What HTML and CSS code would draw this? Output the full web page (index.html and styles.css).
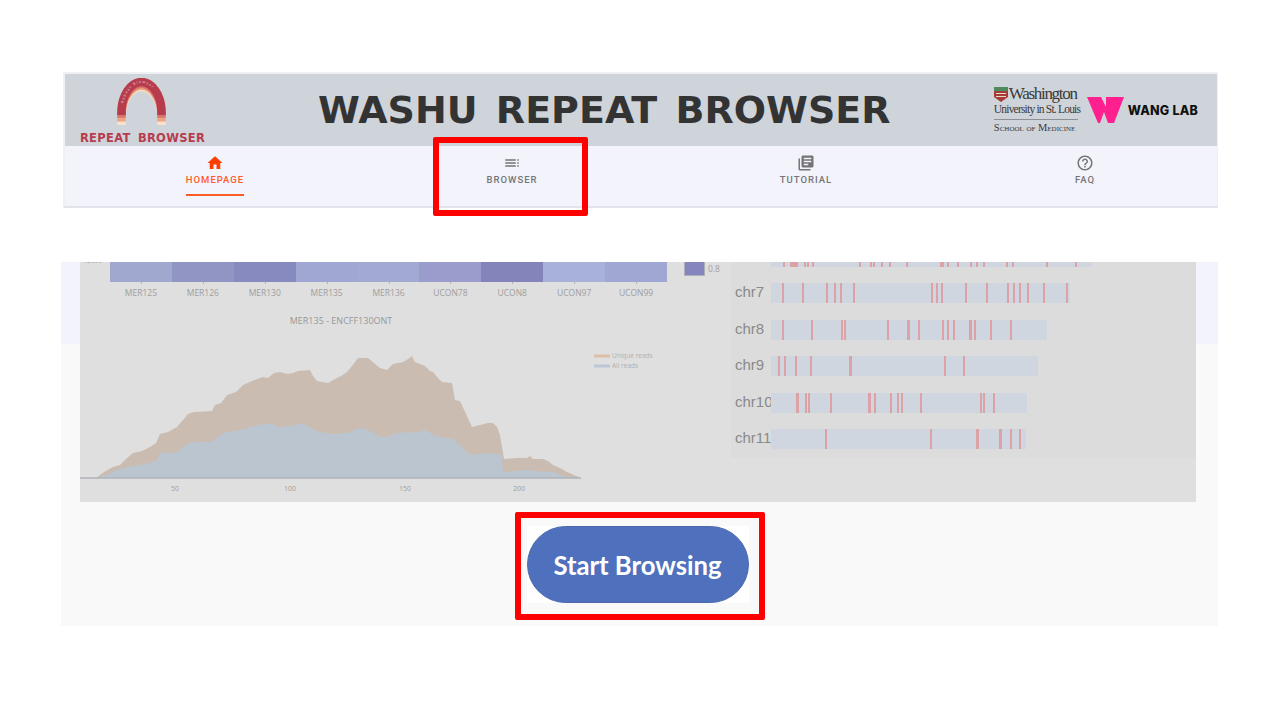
FILE: index.html
```html
<!DOCTYPE html>
<html lang="en">
<head>
    <meta charset="UTF-8">
    <meta name="viewport" content="width=device-width, initial-scale=1.0">
    <title>WashU Repeat Browser</title>
    <link rel="stylesheet" href="styles.css">
</head>
<body>

    <div class="page">
        <header class="topbar">
            <div class="banner">
                <div class="logo">
                    <svg class="arch" viewBox="118 78 50 48" width="50" height="48">
                        <g fill="none" stroke-width="8.5">
                            <path stroke="#fbe0c8" transform="translate(0 5)" d="M122.5 120V112C122.5 95 132 82 142.5 82C153 82 162.5 95 162.5 112V120"/>
                            <path stroke="#eca283" transform="translate(0 3.4)" d="M122.5 118V112C122.5 95 132 82 142.5 82C153 82 162.5 95 162.5 112V118"/>
                            <path stroke="#d9756a" transform="translate(0 1.7)" d="M122.5 116V112C122.5 95 132 82 142.5 82C153 82 162.5 95 162.5 112V116"/>
                            <path id="arch-band" stroke="#b63c4e" d="M122.5 115V112C122.5 95 132 82 142.5 82C153 82 162.5 95 162.5 112V115"/>
                        </g>
                        <text class="arch-text"><textPath href="#arch-band" startOffset="12">Repeat Browser</textPath></text>
                    </svg>
                    <span class="logo-name">REPEAT BROWSER</span>
                </div>
                <h1 class="title">WASHU REPEAT BROWSER</h1>
                <div class="partners">
                    <div class="washu">
                        <div class="washu-top">
                            <svg viewBox="0 0 14 15" width="14" height="15">
                                <rect width="14" height="4" fill="#4f8a5c"/>
                                <path d="M0 4h14v6l-7 5-7-5z" fill="#a83a3a"/>
                                <path d="M2 6h10v1H2zM2 9h10v1H2z" fill="#e4dcc0"/>
                            </svg>
                            <span class="washu-name">Washington</span>
                        </div>
                        <div class="washu-uni">University in St. Louis</div>
                        <div class="washu-school">School of Medicine</div>
                    </div>
                    <div class="wang">
                        <svg viewBox="0 0 37 27" width="37" height="27">
                            <path d="M0 0H14L19 10V0H37L27 26H21L17 15L13 26H11Z" fill="#ff1f8f"/>
                        </svg>
                        <span class="wang-name">WANG LAB</span>
                    </div>
                </div>
            </div>
            <nav class="tabs">
                <a class="tab active">
                    <svg viewBox="0 0 24 24" width="18" height="18"><path d="M10 20v-6h4v6h5v-8h3L12 3 2 12h3v8z"/></svg>
                    <span>Homepage</span>
                </a>
                <a class="tab">
                    <svg viewBox="0 0 24 24" width="18" height="18"><path d="M3 9h14V7H3v2zm0 4h14v-2H3v2zm0 4h14v-2H3v2zm16 0h2v-2h-2v2zm0-10v2h2V7h-2zm0 6h2v-2h-2v2z"/></svg>
                    <span>Browser</span>
                </a>
                <a class="tab">
                    <svg viewBox="0 0 24 24" width="18" height="18"><path d="M4 6H2v14c0 1.1.9 2 2 2h14v-2H4V6zm16-4H8c-1.1 0-2 .9-2 2v12c0 1.1.9 2 2 2h12c1.1 0 2-.9 2-2V4c0-1.1-.9-2-2-2zm-1 9H9V9h10v2zm-4 4H9v-2h6v2zm4-8H9V5h10v2z"/></svg>
                    <span>Tutorial</span>
                </a>
                <a class="tab">
                    <svg viewBox="0 0 24 24" width="18" height="18"><path d="M11 18h2v-2h-2v2zm1-16C6.48 2 2 6.48 2 12s4.48 10 10 10 10-4.48 10-10S17.52 2 12 2zm0 18c-4.41 0-8-3.59-8-8s3.59-8 8-8 8 3.59 8 8-3.59 8-8 8zm0-14c-2.21 0-4 1.79-4 4h2c0-1.1.9-2 2-2s2 .9 2 2c0 2-3 1.75-3 5h2c0-2.25 3-2.5 3-5 0-2.21-1.79-4-4-4z"/></svg>
                    <span>FAQ</span>
                </a>
            </nav>
        </header>

        <section class="panel">
            <div class="figure">
                <div class="plots">
                    <div class="heat-row">
                        <div class="heat-axis"><span>40MV</span></div>
                        <div class="heat">
                            <div class="cell c1"></div>
                            <div class="cell c2"></div>
                            <div class="cell c3"></div>
                            <div class="cell c4"></div>
                            <div class="cell c5"></div>
                            <div class="cell c6"></div>
                            <div class="cell c7"></div>
                            <div class="cell c8"></div>
                            <div class="cell c9"></div>
                            <span>MER125</span>
                            <span>MER126</span>
                            <span>MER130</span>
                            <span>MER135</span>
                            <span>MER136</span>
                            <span>UCON78</span>
                            <span>UCON8</span>
                            <span>UCON97</span>
                            <span>UCON99</span>
                        </div>
                        <div class="scale">
                            <div class="swatch"></div>
                            <span>0.8</span>
                        </div>
                    </div>
                    <svg class="area" viewBox="80 305 651 197" width="651" height="197">
                        <text class="area-title" x="341" y="324">MER135 - ENCFF130ONT</text>
                        <path class="grid" d="M175 348V478M290 348V478M405 348V478M519 348V478M96 391H581M96 434H581"/>
                        <path fill="#cbbcb1" d="M96 478L104 472L113 467L120 465L126 459L133 453L142 451L150 447L156 443L160 434L168 432L177 427L183 420L188 414L194 412L212 411L215 405L221 403L227 395L236 392L243 385L252 381L263 377L268 378L274 373L280 372L287 374L293 373L298 371L310 370L313 376L317 381L328 383L335 379L341 376L347 372L352 366L358 358L363 358L368 358L374 363L380 368L387 370L393 364L403 362L408 359L412 356L415 362L420 364L425 366L430 371L433 372L438 378L442 382L452 383L455 400L460 401L466 414L472 427L480 425L488 423L493 423L497 427L500 435L504 459L516 458L527 458L530 456L533 459L543 459L548 461L553 465L560 468L567 472L574 475L581 478Z"/>
                        <path fill="#bbc5d0" d="M96 478L107 475L113 472L117 470L128 467L140 465L150 463L157 460L160 453L170 453L178 452L183 447L188 443L196 442L212 442L216 438L225 432L237 431L250 427L263 424L273 424L280 427L293 426L298 423L308 426L314 430L320 432L332 434L348 433L354 430L360 428L368 430L375 434L380 437L387 437L397 433L418 432L425 430L435 436L453 439L460 445L470 455L487 453L502 455L503 472L527 470L533 471L553 472L567 477L581 478Z"/>
                        <path d="M80 478H581" stroke="#aeb3b9" stroke-width="1.5"/>
                        <g class="ticks">
                            <text x="175" y="491">50</text>
                            <text x="290" y="491">100</text>
                            <text x="405" y="491">150</text>
                            <text x="519" y="491">200</text>
                        </g>
                        <path d="M594 356H610" stroke="#dcbfa6" stroke-width="3"/>
                        <path d="M594 366H610" stroke="#b9c6d4" stroke-width="3"/>
                        <text class="legend" x="612" y="358">Unique reads</text>
                        <text class="legend" x="612" y="368">All reads</text>
                    </svg>
                </div>
                <div class="chroms" id="chroms"></div>
            </div>
            <div class="start-box">
                <button class="start">Start Browsing</button>
            </div>
        </section>

        <div class="callout callout-browser"></div>
        <div class="callout callout-start"></div>
    </div>

    <script>
        // mark offsets from the start of each track, [x, width] for the wider ones
        const chroms = [
            { name: "", width: 321, marks: [12, [19, 8], 33, 36, 41, 88, 99, 102, 110, 118, 135, 169, 171, 176, 186, 199, 205, 212, 235, 241, 275, 304] },
            { name: "chr7", width: 299, marks: [11, 31, 55, 63, 69, 82, 160, 165, 170, 194, 215, 236, 242, 248, 256, 272, 295] },
            { name: "chr8", width: 276, marks: [11, 40, 70, 73, 116, [136, 3], 147, 171, 176, 182, [198, 3], 203, 219, 239] },
            { name: "chr9", width: 267, marks: [7, 13, 24, 39, [78, 3], 173, 192] },
            { name: "chr10", width: 256, marks: [[25, 3], 34, 37, 59, [97, 3], 103, 119, 126, 130, 149, 209, 212, 222] },
            { name: "chr11", width: 255, marks: [54, 159, [205, 3], [228, 3], 239, 248] }
        ];

        const list = document.getElementById("chroms");
        chroms.forEach(function(chrom) {
            let row = document.createElement("div");
            row.className = chrom.name ? "chrom" : "chrom cut";
            let label = document.createElement("span");
            label.className = "chrom-name";
            label.innerText = chrom.name;
            let track = document.createElement("div");
            track.className = "track";
            track.style.width = chrom.width + "px";
            chrom.marks.forEach(function(m) {
                let [x, w = 2] = [].concat(m);
                let mark = document.createElement("i");
                mark.style.left = x + "px";
                mark.style.width = w + "px";
                track.appendChild(mark);
            });
            row.append(label, track);
            list.appendChild(row);
        });
    </script>

</body>
</html>
```

FILE: styles.css
```css
body {
    margin: 0;
    background-color: #fff;
    font-family: "Liberation Sans", Arial, sans-serif;
}
.page {
    position: relative;
    width: 1157px;
    margin-left: 61px;
    padding-top: 72px;
}

/* header */
.topbar {
    margin-left: 2px;
    border: 2px solid #eef0f4;
    border-bottom-color: #e2e3ea;
    border-right-width: 1px;
    background: #f2f3fb;
}
.banner {
    display: flex;
    align-items: center;
    height: 72px;
    background: #cfd4da;
}
.logo {
    display: flex;
    flex-direction: column;
    align-items: center;
    width: 125px;
    margin-left: 15px;
    height: 72px;
    padding-top: 4px;
    box-sizing: border-box;
}
.arch {
    display: block;
    margin-left: -2px;
}
.arch-text {
    font-family: "DejaVu Sans", sans-serif;
    font-size: 3.5px;
    letter-spacing: 1.2px;
    fill: #e6c4c8;
    dominant-baseline: middle;
}
.logo-name {
    margin-top: 5px;
    font-family: "DejaVu Sans", sans-serif;
    font-size: 11.5px;
    font-weight: 700;
    letter-spacing: 0.3px;
    word-spacing: 3px;
    white-space: nowrap;
    color: #b63c4e;
}
.title {
    margin: 0 0 0 113px;
    font-family: "DejaVu Sans", sans-serif;
    font-size: 38px;
    font-weight: 700;
    word-spacing: 5px;
    white-space: nowrap;
    color: #333;
}
.partners {
    display: flex;
    align-items: center;
    margin-left: auto;
    margin-right: 19px;
    gap: 9px;
}
.washu {
    width: 84px;
    color: #3a3a3a;
    font-family: "Liberation Serif", serif;
    white-space: nowrap;
}
.washu-top {
    display: flex;
    align-items: center;
    gap: 1px;
    height: 15px;
}
.washu-top svg {
    flex: none;
}
.washu-name {
    font-size: 17px;
    letter-spacing: -1.3px;
}
.washu-uni {
    font-size: 11.5px;
    letter-spacing: -0.8px;
    line-height: 15px;
    padding-bottom: 2px;
    border-bottom: 1px solid #8d9196;
}
.washu-school {
    font-size: 10.5px;
    font-variant: small-caps;
    line-height: 12px;
    letter-spacing: 0;
    margin-top: 2px;
}
.wang {
    display: flex;
    align-items: center;
    gap: 4px;
}
.wang-name {
    font-family: Inter, sans-serif;
    font-size: 12.5px;
    font-weight: 800;
    letter-spacing: 0.2px;
    color: #111;
    white-space: nowrap;
}

/* nav */
.tabs {
    display: grid;
    grid-template-columns: 300px 294px 294px 1fr;
    height: 60px;
}
.tab {
    display: flex;
    flex-direction: column;
    align-items: center;
    padding-top: 8px;
    box-sizing: border-box;
    font-family: Roboto, sans-serif;
    font-size: 9.5px;
    font-weight: 500;
    letter-spacing: 1px;
    text-transform: uppercase;
    color: #757575;
    fill: #757575;
}
.tab span {
    margin-top: 2px;
    padding-bottom: 8px;
    line-height: 12px;
}
.tab.active {
    color: #ff5a2a;
    fill: #ff3d00;
}
.tab.active span {
    border-bottom: 2px solid #ff5a2a;
}

/* figure area */
.panel {
    display: flex;
    flex-direction: column;
    align-items: center;
    margin-top: 54px;
    padding-bottom: 23px;
    background: linear-gradient(#f2f3fb 82px, #f9f9f9 82px);
}
.figure {
    display: flex;
    align-self: flex-start;
    width: 1116px;
    height: 240px;
    margin-left: 19px;
    background: #dfdfdf;
}
.plots {
    width: 651px;
}
.heat-row {
    display: flex;
    height: 43px;
}
.heat-axis {
    display: flex;
    align-items: flex-end;
    width: 30px;
    height: 2px;
    overflow: hidden;
    padding-left: 2px;
    box-sizing: border-box;
    font-size: 8px;
    color: #999;
}
.heat-axis span {
    line-height: 6px;
}
.heat {
    display: grid;
    grid-template-columns: repeat(9, 61.9px);
    grid-template-rows: 20px auto;
    width: 557px;
    font-family: "Open Sans", sans-serif;
    font-size: 8.5px;
    color: #9e9e9e;
    text-align: center;
}
.heat span {
    position: relative;
    margin-top: 5px;
    line-height: 12px;
}
.heat span::before {
    content: "";
    position: absolute;
    top: -5px;
    left: 50%;
    width: 1px;
    height: 2px;
    background: #b4b4b4;
}
.c1 { background: #a0a8d0; }
.c2 { background: #9095c4; }
.c3 { background: #878abe; }
.c4 { background: #a0a7d2; }
.c5 { background: #a2a9d3; }
.c6 { background: #9a9ccb; }
.c7 { background: #8384ba; }
.c8 { background: #a8b1d9; }
.c9 { background: #a1a7d3; }
.scale {
    display: flex;
    margin-left: 17px;
    gap: 3px;
    font-family: "Open Sans", sans-serif;
    font-size: 8.5px;
    color: #a0a0a0;
}
.swatch {
    width: 19px;
    height: 13px;
    background: #8586be;
    border: solid #aeb0b8;
    border-width: 0 1px 1px;
}
.scale span {
    margin-top: 1px;
}
.area {
    display: block;
}
.area-title {
    font-family: "Open Sans", sans-serif;
    font-size: 9px;
    fill: #989898;
    text-anchor: middle;
}
.grid {
    fill: none;
    stroke: #dddddd;
    stroke-width: 1;
}
.ticks text {
    font-family: "Open Sans", sans-serif;
    font-size: 7px;
    fill: #a0a0a0;
    text-anchor: middle;
}
.legend {
    font-family: "Open Sans", sans-serif;
    font-size: 6.5px;
    fill: #b0b0b0;
}

/* chromosome tracks */
.chroms {
    display: flex;
    flex-direction: column;
    gap: 16.4px;
    width: 465px;
    height: 196px;
    padding-left: 4px;
    box-sizing: border-box;
    background: #dcdcdc;
}
.chrom {
    display: flex;
    align-items: center;
    height: 20px;
    flex: none;
}
.chrom.cut {
    height: 5px;
}
.chrom-name {
    width: 36px;
    flex: none;
    padding-bottom: 3px;
    font-size: 15px;
    color: #8a8a8a;
}
.track {
    position: relative;
    height: 100%;
    background: #d0d6df;
}
.track i {
    position: absolute;
    top: 0;
    bottom: 0;
    background: #dda2a6;
}

/* start button */
.start-box {
    margin-top: 24px;
    margin-right: 4px;
    background: #fff;
}
.start {
    display: block;
    width: 222px;
    height: 77px;
    padding: 0;
    border: 1px solid #4a69ad;
    border-radius: 39px;
    background: #4f71bd;
    color: #fff;
    font-family: Lato, sans-serif;
    font-size: 25.7px;
    font-weight: 700;
}

/* red highlight boxes drawn over the page */
.callout {
    position: absolute;
    box-sizing: border-box;
    border: 6px solid #f00;
    border-radius: 2px;
}
.callout-browser {
    left: 372px;
    top: 137px;
    width: 155px;
    height: 79px;
}
.callout-start {
    left: 454px;
    top: 512px;
    width: 250px;
    height: 108px;
}
```
